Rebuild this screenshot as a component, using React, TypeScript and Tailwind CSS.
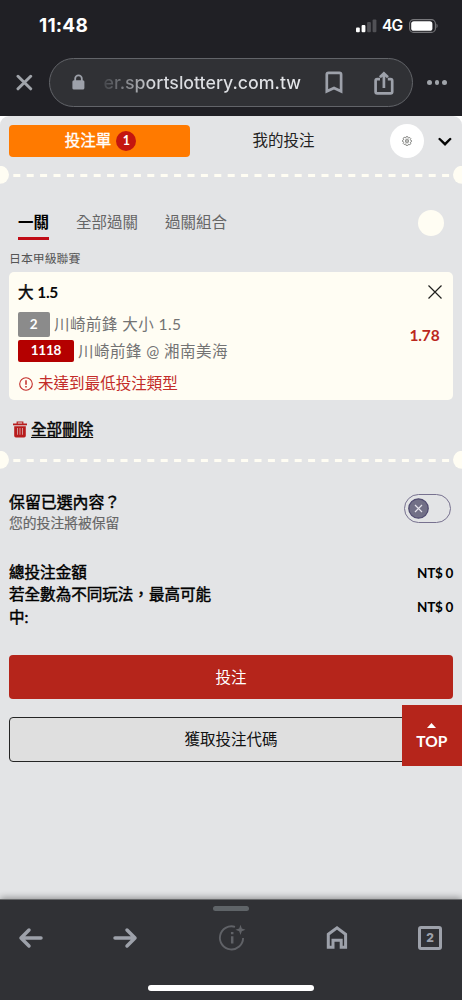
import type { ReactNode } from "react";

function Perforation() {
  return (
    <div className="relative h-[18px] w-full overflow-hidden">
      <svg className="block h-[18px] w-full" viewBox="0 0 462 18">
        <line x1="13.3" x2="450" y1="9.5" y2="9.5" stroke="#fffdf3" strokeWidth="3" strokeDasharray="7 6.4" />
        <circle cx="0" cy="8.8" r="9" fill="#fffdf3" />
        <circle cx="462" cy="8.8" r="9" fill="#fffdf3" />
      </svg>
    </div>
  );
}

function StatusBar() {
  return (
    <div className="flex h-[58px] items-start justify-between pr-[23px] pl-[39px] font-['Inter','Liberation_Sans',sans-serif] text-white">
      <span className="mt-[12px] text-[19px] leading-[27px] font-bold tracking-[0.2px]">11:48</span>
      <div className="mt-[18px] flex items-center">
        <svg width="22" height="14" viewBox="0 0 22 14">
          <rect x="0" y="8.5" width="3.8" height="4.8" rx="1" fill="#fff" />
          <rect x="5.6" y="6" width="3.8" height="7.3" rx="1" fill="#fff" />
          <rect x="11.1" y="3" width="3.8" height="10.3" rx="1" fill="#515156" />
          <rect x="16.6" y="0.5" width="3.8" height="12.8" rx="1" fill="#515156" />
        </svg>
        <span className="ml-[4px] w-[22px] text-[15.5px] leading-[16px] font-semibold tracking-[-0.7px]">4G</span>
        <svg className="ml-[5px]" width="30" height="14" viewBox="0 0 30 14">
          <rect x="0.6" y="0.6" width="25.8" height="12.8" rx="4" fill="none" stroke="#77777b" strokeWidth="1.1" />
          <rect x="2.2" y="2.2" width="21.2" height="9.6" rx="2.6" fill="#fff" />
          <path d="M27.5 4.8c1.4.5 1.4 3.9 0 4.4z" fill="#77777b" />
        </svg>
      </div>
    </div>
  );
}

function AddressBar() {
  return (
    <div className="flex h-[58px] items-start">
      <div className="flex h-[49px] w-[49px] items-center pl-[16px]">
        <svg width="17" height="17" viewBox="0 0 17 17" stroke="#a0a4aa" strokeWidth="3" strokeLinecap="round">
          <path d="M2 2.3l12.7 12.5M14.7 2.3L2 14.8" />
        </svg>
      </div>
      <div className="flex h-[49px] w-[364px] items-center rounded-full border border-[#626469] bg-[#303135] pl-[22px]">
        <svg width="13" height="17" viewBox="0 0 13 17">
          <path d="M3.2 7.5V4.6a3.3 3.3 0 0 1 6.6 0v2.9" fill="none" stroke="#9da1aa" strokeWidth="1.8" />
          <rect x="0.4" y="6.2" width="12" height="9.3" rx="1.6" fill="#9da1aa" />
        </svg>
        <span className="ml-[18.5px] w-[200px] bg-linear-to-r from-[#46484d] via-[#d8dade] via-25% to-[#e4e6e9] bg-clip-text font-['Inter','Liberation_Sans',sans-serif] text-[17.8px] leading-[28px] font-medium tracking-[-0.02px] whitespace-nowrap text-transparent">
          er.sportslottery.com.tw
        </span>
        <svg className="ml-[21.5px]" width="18" height="23" viewBox="0 0 18 23" fill="none" stroke="#9da1aa" strokeWidth="2.7">
          <path d="M1.8 20.3V3.5q0-1.7 1.7-1.7h10.9q1.7 0 1.7 1.7v16.8L9 17z" />
        </svg>
        <svg className="ml-[31px]" width="20" height="24" viewBox="0 0 20 24" fill="none" stroke="#9da1aa" strokeWidth="2.7">
          <path d="M6 8.1H3.2q-1.6 0-1.6 1.6v11q0 1.6 1.6 1.6h13.4q1.6 0 1.6-1.6v-11q0-1.6-1.6-1.6h-2.8M9.9 17V3M5.9 6.3l4-4 4 4" />
        </svg>
      </div>
      <div className="flex h-[49px] items-center gap-[3px] pl-[14px]">
        <i className="size-[4.5px] rounded-full bg-[#a0a4aa]" />
        <i className="size-[4.5px] rounded-full bg-[#a0a4aa]" />
        <i className="size-[4.5px] rounded-full bg-[#a0a4aa]" />
      </div>
    </div>
  );
}

function Header() {
  return (
    <div className="flex h-[50px] items-start pt-[9px] pl-[9px]">
      <button className="flex h-[32px] w-[181px] items-center justify-center gap-[5px] rounded-[4px] bg-[#ff7a00] pl-[2px] text-[15.5px] text-white">
        <span className="[-webkit-text-stroke:0.35px]">投注單</span>
        <span className="flex size-[20px] items-center justify-center rounded-full bg-[#c4160f] text-[12.5px] font-bold">1</span>
      </button>
      <button className="h-[32px] w-[187px] text-[15.5px] text-[#222]">我的投注</button>
      <div className="-mt-px ml-[13px] flex size-[34px] items-center justify-center rounded-full bg-white">
        <svg width="10" height="10" viewBox="0 0 10 10" fill="none" stroke="#62635f" strokeWidth="0.75">
          <path d="M4.3.6h1.4l.3 1 .8.4 1-.5 1 1-.5 1 .3.8 1 .3v1l-1 .4-.3.8.5 1-1 1-1-.5-.8.4-.3 1H4.3L4 8.4 3.2 8l-1 .5-1-1 .5-1-.3-.8-1-.3v-1l1-.4.3-.8-.5-1 1-1 1 .5L4 1.6z" />
          <ellipse cx="5" cy="5" rx="1.5" ry="2" />
          <circle cx="5" cy="5" r=".4" />
        </svg>
      </div>
      <svg className="mt-[12px] ml-[14px]" width="14" height="10" viewBox="0 0 14 10" fill="none" stroke="#050505" strokeWidth="2.4" strokeLinecap="round">
        <path d="M1.6 2L7 7.2 12.2 2" />
      </svg>
    </div>
  );
}

function Selection() {
  return (
    <article className="mx-[9px] flex h-[128.5px] rounded-[5px] bg-[#fffdf3] pr-[11px] pl-[9px]">
      <div className="flex-1 text-[#737373]">
        <h2 className="mt-[9px] h-[31px] text-[15.5px] leading-[22px] font-bold text-[#090909]">
          <span className="font-normal [-webkit-text-stroke:0.5px]">大</span> <span className="tracking-[-0.3px]">1.5</span>
        </h2>
        <div className="flex h-[25px] items-center text-[15.5px] tracking-[0.45px]">
          <span className="flex h-[25px] w-[32px] items-center justify-center rounded-[2px] bg-[#8b8b8b] text-[13.5px] font-bold text-white">2</span>
          <span className="ml-[4px] pt-px">川崎前鋒 大小 1.5</span>
        </div>
        <div className="mt-[2.5px] flex h-[23px] items-center text-[15.5px] tracking-[0.45px]">
          <span className="flex h-[22px] w-[56px] items-center justify-center rounded-[2px] bg-[#b40000] text-[13.5px] font-bold tracking-[-0.2px] text-white">1118</span>
          <span className="ml-[4px] pt-[1.5px]">川崎前鋒 @ 湘南美海</span>
        </div>
        <div className="mt-[10px] flex h-[23px] items-center text-[15.55px] text-[#c32c29]">
          <svg className="ml-px" width="14" height="14" viewBox="0 0 14 14" fill="none" stroke="currentColor">
            <circle cx="7" cy="7" r="6.3" strokeWidth="1.1" />
            <path d="M7 3.3v4.5M7 9v1.5" strokeWidth="1.5" />
          </svg>
          <span className="ml-[5px]">未達到最低投注類型</span>
        </div>
      </div>
      <div className="flex flex-col items-end">
        <svg className="mt-[13px]" width="14" height="14" viewBox="0 0 14 14" stroke="#20201e" strokeWidth="1.2">
          <path d="M.5.5l13 13M13.5.5l-13 13" />
        </svg>
        <b className="mt-[25px] mr-[2.5px] text-[15.5px] leading-[22px] tracking-[-0.15px] text-[#bb271e]">1.78</b>
      </div>
    </article>
  );
}

function NavCell({ children, className }: { children: ReactNode; className: string }) {
  return <div className={"flex h-[28px] items-center " + className}>{children}</div>;
}

function BottomBar() {
  return (
    <footer className="relative flex h-[101px] flex-col border-t border-[#68696b] bg-[#303135] shadow-[0_-1px_7px_rgba(0,0,0,0.4)]">
      <div className="mx-auto mt-[6px] h-[5px] w-[36px] rounded-full bg-[#5f6468]" />
      <div className="mt-[12.5px] flex h-[28px]">
        <NavCell className="w-[112px] pl-[18px]">
          <svg width="26" height="22" viewBox="0 0 26 22" fill="none" stroke="#9da1aa" strokeWidth="3.5" strokeLinecap="round" strokeLinejoin="round">
            <path d="M23 11H3M11 3l-8 8 8 8" />
          </svg>
        </NavCell>
        <NavCell className="w-[106px]">
          <svg width="26" height="22" viewBox="0 0 26 22" fill="none" stroke="#9da1aa" strokeWidth="3.5" strokeLinecap="round" strokeLinejoin="round">
            <path d="M3 11h20M15 3l8 8-8 8" />
          </svg>
        </NavCell>
        <NavCell className="w-[108px]">
          <svg width="29" height="28" viewBox="0 0 29 28" fill="none" stroke="#606267" strokeWidth="1.9">
            <path d="M17 2.8A11.6 11.6 0 1 0 25.1 14" />
            <path d="M14.2 12.2v7.2M14.2 8v2.3" strokeWidth="2.5" />
            <path d="M22.5.7l1.3 3.7 3.7 1.4-3.7 1.4-1.3 3.7-1.3-3.7-3.7-1.4 3.7-1.4z" fill="#606267" stroke="none" />
          </svg>
        </NavCell>
        <NavCell className="w-[92px]">
          <svg width="22" height="25" viewBox="0 0 22 25" fill="none" stroke="#9da1aa" strokeWidth="3">
            <path d="M2.3 9.3L11 2.8l8.6 6.5v13h-4.4v-7H7v7H2.3z" />
          </svg>
        </NavCell>
        <NavCell className="flex-1">
          <span className="flex size-[24px] items-center justify-center rounded-[3px] border-[3px] border-[#9da1aa] font-['Inter','Liberation_Sans',sans-serif] text-[12px] leading-none font-extrabold text-[#9da1aa]">2</span>
        </NavCell>
      </div>
      <div className="mx-auto mt-[33.5px] h-[6px] w-[166px] rounded-full bg-white" />
    </footer>
  );
}

export default function App() {
  return (
    <div lang="zh-Hant" className="flex h-[1000px] w-[462px] flex-col overflow-hidden bg-[#202025] font-['Lato','Noto_Sans_CJK_TC',sans-serif]">
      <header className="h-[116px] shrink-0">
        <StatusBar />
        <AddressBar />
      </header>
      <div className="h-[783px] shrink-0 bg-white">
        <main className="h-full rounded-t-[9px] bg-[#e3e4e6]">
          <Header />
          <Perforation />
          <nav className="flex h-[62px] items-start pt-[26px] pl-[18px] text-[15.5px] leading-[24px] text-[#666]">
            <span className="h-[30px] border-b-[3px] border-[#c10d17] font-bold text-black">一關</span>
            <span className="ml-[27px]">全部過關</span>
            <span className="ml-[27px]">過關組合</span>
            <i className="ml-auto mr-[18px] size-[26px] rounded-full bg-[#fffdf3]" />
          </nav>
          <p className="h-[25.5px] pl-[9px] text-[11.9px] leading-[25px] text-[#555]">日本甲級聯賽</p>
          <Selection />
          <div className="flex h-[50.5px] items-start pt-[17.5px] pl-[13px]">
            <svg className="mt-[3px]" width="14" height="17" viewBox="0 0 14 17" fill="none" stroke="#b81c1d">
              <path d="M0 3.4h14" strokeWidth="1.8" />
              <path d="M4.2 3V1h5.6v2" strokeWidth="1.2" />
              <path d="M1.2 5.3h11.6v9.5q0 1.7-1.7 1.7H2.9q-1.7 0-1.7-1.7zM4.2 7v6.7h.6V7zm2.5 0v6.7h.6V7zm2.5 0v6.7h.6V7z" fill="#b81c1d" fillRule="evenodd" stroke="none" />
            </svg>
            <a className="ml-[4px] text-[15.55px] leading-[23px] text-[#080808] underline decoration-[1.3px] underline-offset-[2px] [-webkit-text-stroke:0.5px]">全部刪除</a>
          </div>
          <Perforation />
          <section className="flex h-[78.5px] justify-between pt-[21px] pr-[11px] pl-[9px]">
            <div>
              <h3 className="text-[15.9px] leading-[23px] text-black [-webkit-text-stroke:0.45px]">保留已選內容？</h3>
              <p className="text-[13.8px] leading-[19px] text-[#666] [-webkit-text-stroke:0.2px]">您的投注將被保留</p>
            </div>
            <div className="mt-[4px] flex h-[29px] w-[47px] items-center rounded-full border border-[#77718f] pl-[3px]">
              <svg width="21" height="21" viewBox="0 0 21 21">
                <circle cx="10.5" cy="10.5" r="9.7" fill="#727087" stroke="#504b70" strokeWidth="1.3" />
                <path d="M7 7l7 7M14 7l-7 7" stroke="#e7e5ed" strokeWidth="1.2" />
              </svg>
            </div>
          </section>
          <section className="flex h-[107.5px] flex-col pt-[13.5px] pr-[9px] pl-[9px] text-[15.55px] leading-[22.5px] text-black">
            <div className="flex items-center justify-between">
              <span className="[-webkit-text-stroke:0.45px]">總投注金額</span>
              <span className="pt-[2px] text-[13.5px] leading-[20px] font-bold tracking-[-0.3px]">NT$ 0</span>
            </div>
            <div className="flex items-center justify-between">
              <span className="w-[210px] [-webkit-text-stroke:0.45px]">若全數為不同玩法，最高可能中:</span>
              <span className="pt-[3px] text-[13.5px] leading-[20px] font-bold tracking-[-0.3px]">NT$ 0</span>
            </div>
          </section>
          <div className="relative flex flex-col gap-[18px] px-[9px]">
            <button className="h-[44.5px] rounded-[4px] bg-[#b5251b] pt-px text-[15.5px] text-white">投注</button>
            <button className="h-[44.5px] rounded-[4px] border border-[#252525] bg-[#dfdfdf] pt-px text-[15.5px] text-[#111]">獲取投注代碼</button>
            <button className="absolute top-[50.5px] right-0 flex h-[60.5px] w-[60.5px] flex-col items-center bg-[#b5251b] pt-[17.5px] text-white">
              <svg width="9" height="5" viewBox="0 0 9 5" fill="currentColor"><path d="M4.5 0L9 5H0z" /></svg>
              <span className="mt-[2px] text-[15.5px] leading-[22px] font-bold">TOP</span>
            </button>
          </div>
        </main>
      </div>
      <BottomBar />
    </div>
  );
}
